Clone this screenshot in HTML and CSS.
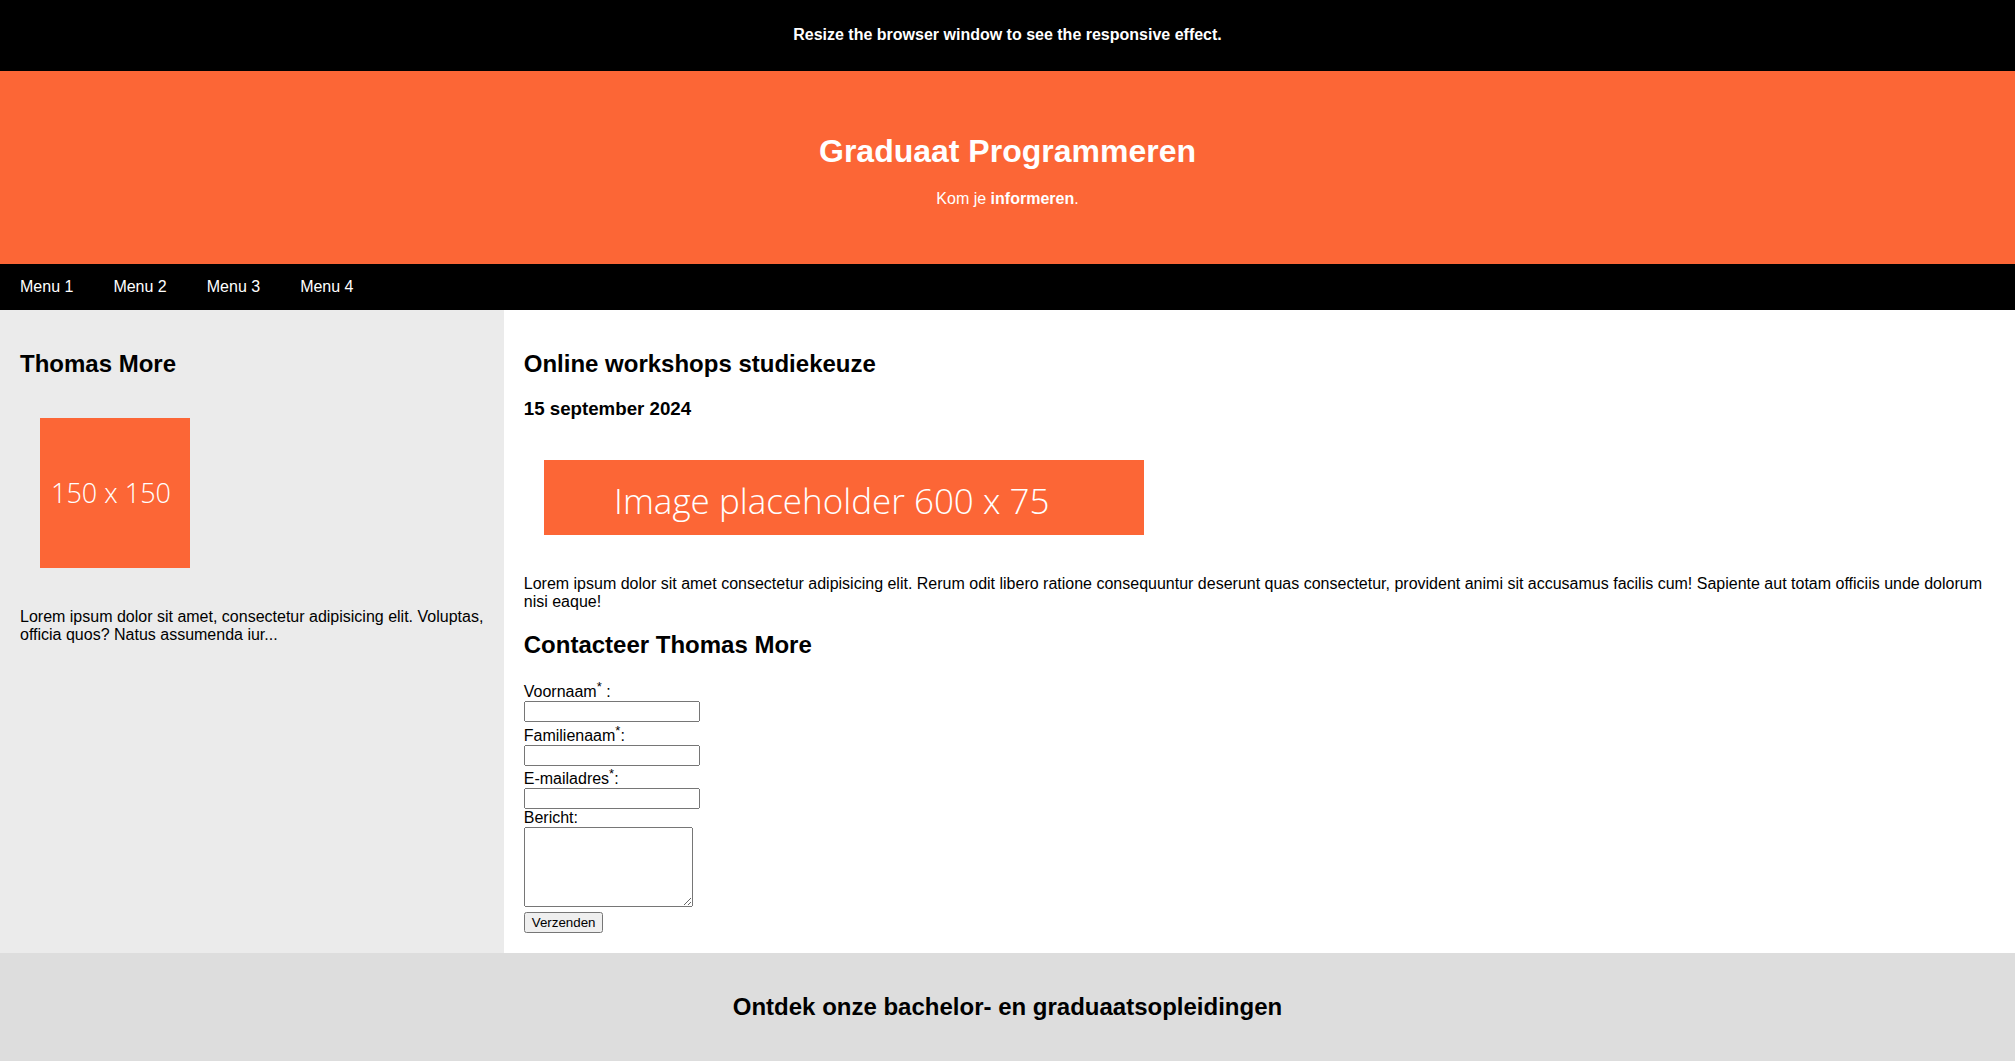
FILE: index.html
```html
<!DOCTYPE html>
<html lang="nl">
<head>
<meta charset="utf-8">
<title>Graduaat Programmeren</title>
<link rel="stylesheet" href="styles.css">
</head>
<body>
<div class="topbar"><p>Resize the browser window to see the responsive effect.</p></div>
<header class="header">
  <h1>Graduaat Programmeren</h1>
  <p>Kom je <b>informeren</b>.</p>
</header>
<nav class="navbar">
  <a href="#">Menu 1</a>
  <a href="#">Menu 2</a>
  <a href="#">Menu 3</a>
  <a href="#">Menu 4</a>
</nav>
<div class="row">
  <aside class="side">
    <h2>Thomas More</h2>
    <div class="figure"><div class="ph ph-square">150 x 150</div></div>
    <p>Lorem ipsum dolor sit amet, consectetur adipisicing elit. Voluptas, officia quos? Natus assumenda iur...</p>
  </aside>
  <main class="main">
    <h2>Online workshops studiekeuze</h2>
    <h3>15 september 2024</h3>
    <div class="figure figure-main"><div class="ph ph-wide">Image placeholder 600 x 75</div></div>
    <p>Lorem ipsum dolor sit amet consectetur adipisicing elit. Rerum odit libero ratione consequuntur deserunt quas consectetur, provident animi sit accusamus facilis cum! Sapiente aut totam officiis unde dolorum nisi eaque!</p>
    <h2>Contacteer Thomas More</h2>
    <form class="form" action="#">
      <label for="vn">Voornaam<sup>*</sup> :</label><br>
      <input type="text" id="vn" class="field"><br>
      <label for="fn">Familienaam<sup>*</sup>:</label><br>
      <input type="text" id="fn" class="field"><br>
      <label for="em">E-mailadres<sup>*</sup>:</label><br>
      <input type="email" id="em" class="field"><br>
      <label for="msg">Bericht:</label><br>
      <textarea id="msg" class="area"></textarea><br>
      <button type="button" class="btn">Verzenden</button>
    </form>
  </main>
</div>
<footer class="footer">
  <h2>Ontdek onze bachelor- en graduaatsopleidingen</h2>
</footer>
</body>
</html>
```
FILE: styles.css
```css
html, body {
  margin: 0;
  padding: 0;
}
body {
  font-family: "Liberation Sans", Arial, sans-serif;
  font-size: 16px;
  color: #000;
  background: #fff;
}

.topbar {
  background: #000;
  color: #fff;
  text-align: center;
  font-weight: bold;
  height: 71px;
  box-sizing: border-box;
  padding-top: 26px;
}
.topbar p {
  margin: 0;
}

.header {
  background: #fc6636;
  color: #fff;
  text-align: center;
  height: 193px;
  box-sizing: border-box;
  padding-top: 62px;
}
.header h1 {
  margin: 0;
  font-size: 32px;
}
.header p {
  margin: 20px 0 0;
}

.navbar {
  background: #000;
  height: 46px;
  display: flex;
}
.navbar a {
  display: block;
  color: #fff;
  text-decoration: none;
  padding: 14px 20px;
  line-height: 18px;
}

.row {
  display: grid;
  grid-template-columns: 25% 1fr;
}
.side {
  background: #ebebeb;
  padding: 20px;
}
.main {
  background: #fff;
  padding: 20px;
}
.side h2, .main h2 {
  font-size: 24px;
  margin: 19.92px 0;
}
.main h3 {
  font-size: 18.72px;
  margin: 18.72px 0;
}
.side p, .main p {
  margin: 16px 0;
}

.figure {
  padding: 20px 20px 24px;
}
.figure-main {
  padding-top: 21.5px;
}
.ph {
  background: #fc6636;
  color: #fff;
  font-family: "Open Sans", sans-serif;
  font-weight: 300;
  text-align: center;
  box-sizing: border-box;
}
.ph-square {
  width: 150px;
  height: 150px;
  font-size: 27px;
  line-height: 150px;
  padding-right: 8px;
}
.ph-wide {
  width: 600px;
  height: 75px;
  font-size: 35px;
  line-height: 75px;
  padding-top: 3px;
  padding-right: 24px;
}

.form {
  margin: 0;
}
.form sup {
  font-size: 13px;
}
.field {
  box-sizing: border-box;
  width: 176px;
  height: 21px;
  font-family: "Liberation Sans", Arial, sans-serif;
  font-size: 13.33px;
  margin: 0;
}
.area {
  box-sizing: border-box;
  width: 169px;
  height: 80px;
  margin: 0 0 1px;
  font-family: "Liberation Mono", monospace;
  font-size: 13.33px;
}
.btn {
  font-family: "Liberation Sans", Arial, sans-serif;
  font-size: 13.33px;
  height: 21px;
  margin: 0;
  padding: 1px 6px;
}

.footer {
  background: #dddddd;
  text-align: center;
  padding: 20px;
}
.footer h2 {
  font-size: 24px;
  margin: 19.92px 0;
}
```
